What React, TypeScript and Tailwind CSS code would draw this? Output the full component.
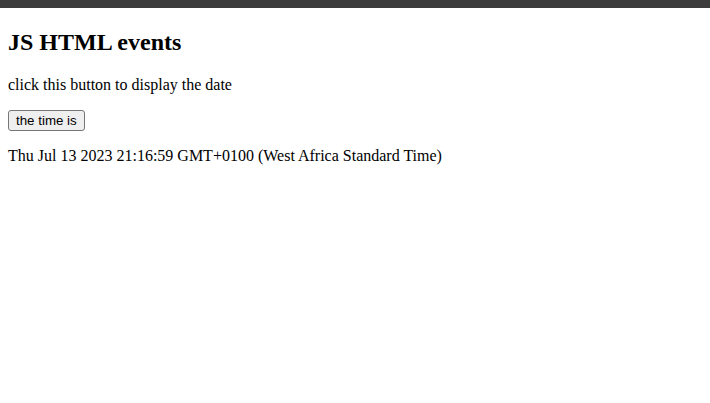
export default function App() {
  return (
    <div className="min-h-[403px] w-full bg-white text-black">
      {/* top strip */}
      <div className="h-2 w-full bg-[#3c3c3c]" />

      <div className="px-2 font-['Liberation_Serif',serif]">
        <h1 className="mt-[20px] text-2xl leading-[28px] font-bold">JS HTML events</h1>
        <p className="mt-[20px] text-base leading-[18px]">click this button to display the date</p>
        <button className="mt-[16px] block h-[21px] rounded-[3px] border border-[#767676] bg-[#efefef] px-[7px] font-['Liberation_Sans',sans-serif] text-[13.33px] leading-[19px] hover:bg-[#e5e5e5]">
          the time is
        </button>
        <p className="mt-[16px] text-base leading-[18px]">
          Thu Jul 13 2023 21:16:59 GMT+0100 (West Africa Standard Time)
        </p>
      </div>
    </div>
  )
}
